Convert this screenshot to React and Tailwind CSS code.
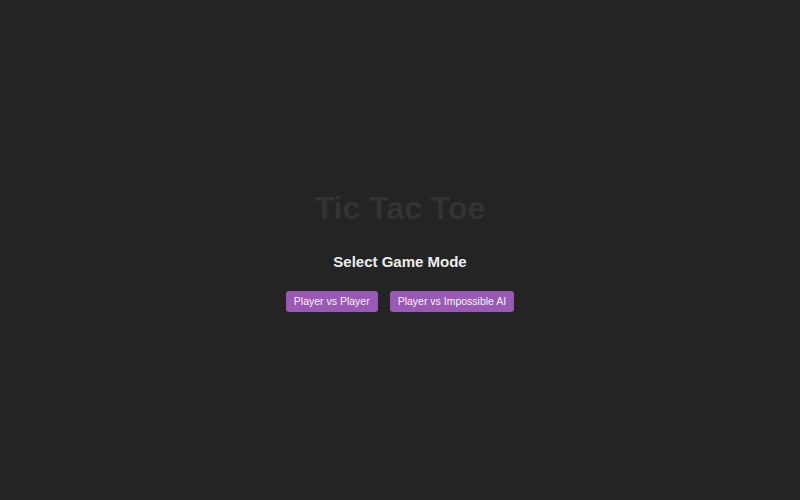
export default function App() {
  return (
    <div className="w-[800px] h-[500px] bg-[#242424] flex flex-col items-center pt-[192px]" style={{ fontFamily: '"Liberation Sans", Arial, sans-serif' }}>
      <h1 className="text-[32px] font-bold text-[#333333] leading-none">Tic Tac Toe</h1>
      <h2 className="text-[15px] font-bold text-[#eeeeee] leading-none mt-[30px]">Select Game Mode</h2>
      <div className="flex gap-[12px] mt-[22px]">
        <button className="h-[21px] px-[8px] rounded-[3px] bg-[#9b59b6] text-[#f4f4f4] text-[10.5px] leading-none">Player vs Player</button>
        <button className="h-[21px] px-[8px] rounded-[3px] bg-[#9b59b6] text-[#f4f4f4] text-[10.5px] leading-none">Player vs Impossible AI</button>
      </div>
    </div>
  );
}
